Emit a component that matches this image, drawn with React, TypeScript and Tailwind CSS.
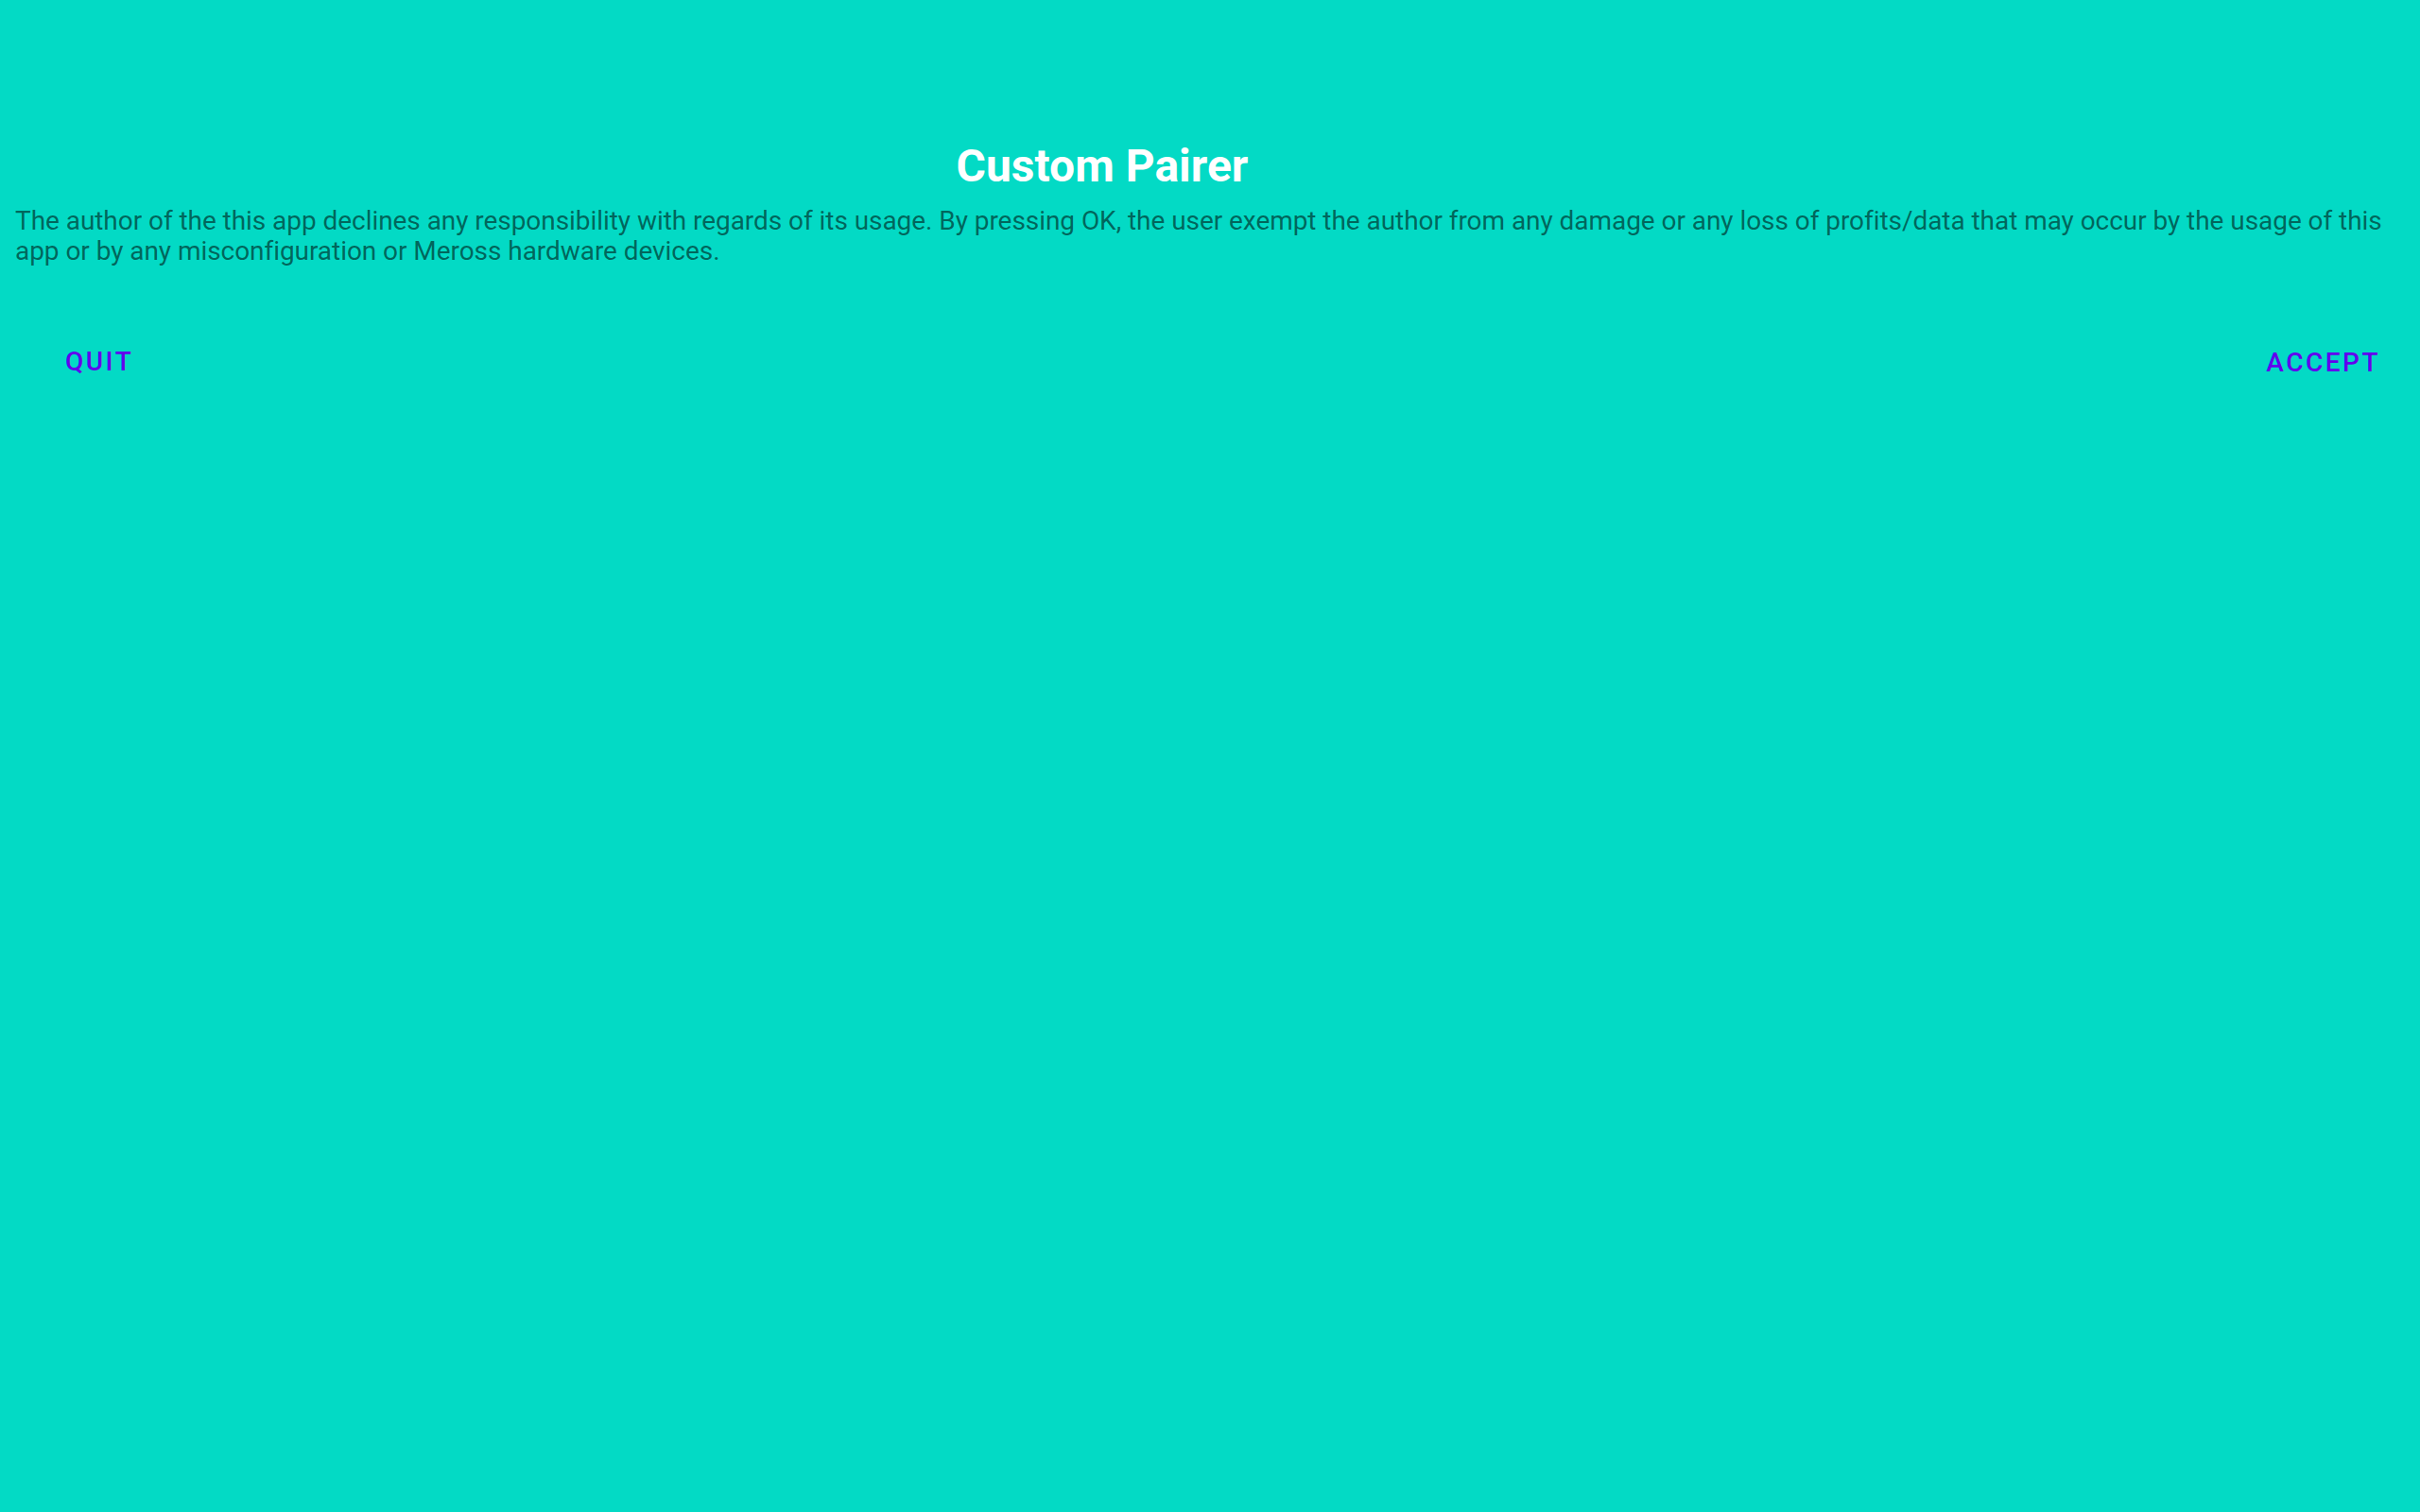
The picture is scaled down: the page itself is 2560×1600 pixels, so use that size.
import React from "react";

export default function App() {
  return (
    <div
      className="w-[2560px] h-[1600px] bg-[#03dac5] flex flex-col"
      style={{ fontFamily: "Roboto, 'Noto Sans', sans-serif" }}
    >
      <div className="pt-[148px] flex justify-center pr-[228px]">
        <h1 className="text-[48px] leading-[56px] font-bold text-white">Custom Pairer</h1>
      </div>
      <p className="mt-[14px] px-4 text-[28px] leading-[32px] tracking-[-0.055px] text-black/55">
        The author of the this app declines any responsibility with regards of its usage. By pressing OK, the user exempt the author from any damage or any loss of profits/data that may occur by the usage of this app or by any misconfiguration or Meross hardware devices.
      </p>
      <div className="mt-[85px] flex justify-between items-start pl-[69px] pr-[42px]">
        <button className="text-[28px] leading-[32px] font-medium tracking-[0.0892em] text-[#6200ee] uppercase">
          Quit
        </button>
        <button className="mt-[1px] text-[28px] leading-[32px] font-medium tracking-[0.0892em] text-[#6200ee] uppercase">
          Accept
        </button>
      </div>
    </div>
  );
}
